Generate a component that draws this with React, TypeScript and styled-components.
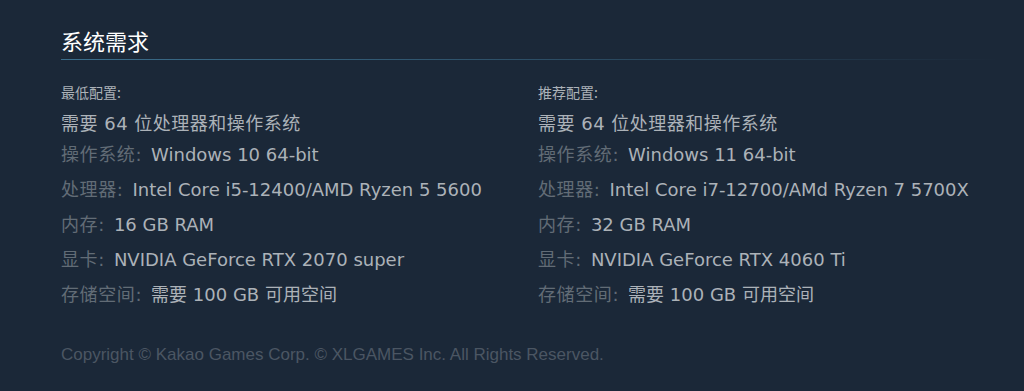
import React from 'react';
import styled, { createGlobalStyle } from 'styled-components';

const GlobalStyle = createGlobalStyle`
  html, body {
    margin: 0;
    padding: 0;
    background: #1b2838;
  }
  body {
    font-family: 'DejaVu Sans', 'Noto Sans CJK SC', sans-serif;
  }
`;

const Page = styled.div`
  width: 1024px;
  height: 391px;
  background: #1b2838;
  padding: 25px 24px 0 61px;
  box-sizing: border-box;
`;

const Heading = styled.h2`
  margin: 0;
  padding-bottom: 5px;
  font-family: 'Noto Sans CJK SC', sans-serif;
  font-size: 22px;
  font-weight: 400;
  line-height: 30px;
  color: #ffffff;
  background-image: linear-gradient(to right, #3b6e8c 0%, rgba(59, 110, 140, 0.45) 60%, rgba(59, 110, 140, 0) 100%);
  background-size: 100% 1px;
  background-repeat: no-repeat;
  background-position: bottom left;
`;

const Columns = styled.div`
  display: grid;
  grid-template-columns: 477px 1fr;
  margin-top: 22px;
`;

const Column = styled.div`
  display: flex;
  flex-direction: column;
`;

const Title = styled.div`
  font-family: 'Noto Sans CJK SC', sans-serif;
  font-size: 14px;
  line-height: 20px;
  color: #acb2b8;
  margin-bottom: 8px;
`;

const List = styled.ul`
  list-style: none;
  margin: 0;
  padding: 0;
`;

const Item = styled.li<{ $head?: boolean }>`
  font-size: 18px;
  line-height: ${(p) => (p.$head ? '27px' : '35px')};
  color: #acb2b8;
  white-space: nowrap;
  letter-spacing: ${(p) => (p.$head ? '0.5px' : '0')};
`;

const Label = styled.span`
  color: #626c76;
  margin-right: 9px;
  letter-spacing: 0.6px;
`;

const Footer = styled.div`
  margin-top: 33px;
  font-family: 'Liberation Sans', Arial, sans-serif;
  font-size: 17px;
  line-height: 20px;
  color: #4b5663;
`;

type Spec = { label: string; value: string };

const minimum: Spec[] = [
  { label: '操作系统:', value: 'Windows 10 64-bit' },
  { label: '处理器:', value: 'Intel Core i5-12400/AMD Ryzen 5 5600' },
  { label: '内存:', value: '16 GB RAM' },
  { label: '显卡:', value: 'NVIDIA GeForce RTX 2070 super' },
  { label: '存储空间:', value: '需要 100 GB 可用空间' },
];

const recommended: Spec[] = [
  { label: '操作系统:', value: 'Windows 11 64-bit' },
  { label: '处理器:', value: 'Intel Core i7-12700/AMd Ryzen 7 5700X' },
  { label: '内存:', value: '32 GB RAM' },
  { label: '显卡:', value: 'NVIDIA GeForce RTX 4060 Ti' },
  { label: '存储空间:', value: '需要 100 GB 可用空间' },
];

const ReqColumn = ({ title, specs }: { title: string; specs: Spec[] }) => (
  <Column>
    <Title>{title}</Title>
    <List>
      <Item $head>需要 64 位处理器和操作系统</Item>
      {specs.map((s) => (
        <Item key={s.label}>
          <Label>{s.label}</Label>
          {s.value}
        </Item>
      ))}
    </List>
  </Column>
);

const App = (): JSX.Element => (
  <>
    <GlobalStyle />
    <Page>
      <Heading>系统需求</Heading>
      <Columns>
        <ReqColumn title="最低配置:" specs={minimum} />
        <ReqColumn title="推荐配置:" specs={recommended} />
      </Columns>
      <Footer>Copyright © Kakao Games Corp. © XLGAMES Inc. All Rights Reserved.</Footer>
    </Page>
  </>
);

export default App;
